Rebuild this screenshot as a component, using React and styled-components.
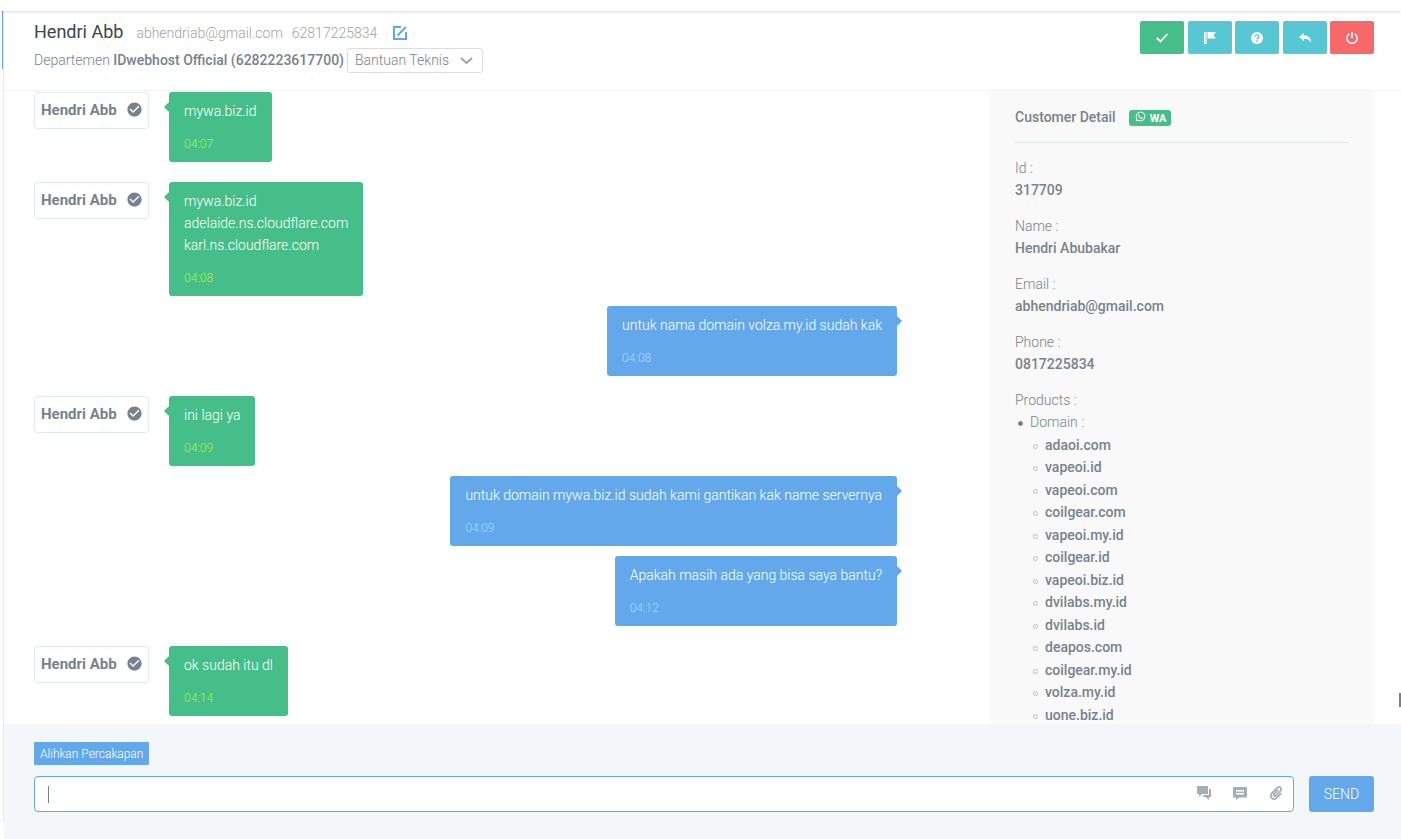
import React, { useState } from 'react';
import styled, { createGlobalStyle } from 'styled-components';
import { FaPaperclip, FaWhatsapp } from 'react-icons/fa';
import { MdCheckCircle } from 'react-icons/md';

const GlobalStyle = createGlobalStyle`
    *, *::before {
        box-sizing: border-box;
    }
    body {
        margin: 0;
        background: #fff;
        color: #76838f;
        font-family: Roboto, "Liberation Sans", sans-serif;
        font-size: 14px;
        font-weight: 300;
        line-height: 22px;
    }
    button, input, select {
        font: inherit;
        color: inherit;
    }
`

const Page = styled.div`
    display: flex;
    flex-direction: column;
    height: 100vh;
    position: relative;
    overflow: hidden;
`

const TopBar = styled.div`
    flex: 0 0 11px;
    background: #fff;
    box-shadow: 0 1px 3px rgba(0, 0, 0, 0.14);
    z-index: 1;
`

const Body = styled.div`
    flex: 1;
    min-height: 0;
    display: flex;
`

const ListEdge = styled.aside`
    flex: 0 0 4px;
    margin-bottom: 18px;
    border-right: 1px solid #e4eaec;
    border-bottom: 1px solid #e4eaec;
`

const ActiveMark = styled.div`
    height: 58px;
    margin-left: 2px;
    background: #62a8ea;
`

const Main = styled.main`
    flex: 1;
    min-width: 0;
    display: flex;
    flex-direction: column;
`

const Header = styled.header`
    flex: 0 0 80px;
    display: flex;
    justify-content: space-between;
    align-items: flex-start;
    padding: 10px 27px 0 30px;
    border-bottom: 1px solid #f3f3f4;
`

const TitleRow = styled.div`
    display: flex;
    align-items: baseline;
    height: 22px;
`

const Title = styled.h1`
    margin: 0 13px 0 0;
    color: #37474f;
    font-size: 18px;
    font-weight: 400;
    line-height: 22px;
`

const Contact = styled.div`
    display: flex;
    gap: 9px;
    margin-right: 16px;
    color: #a3a3a3;
`

const EditButton = styled.button`
    align-self: center;
    display: flex;
    padding: 2px 0 0;
    border: 0;
    background: none;
    color: #62a8ea;
`

const DepartmentRow = styled.div`
    display: flex;
    align-items: baseline;
    gap: 3px;
    margin-top: 5px;
`

const Strong = styled.strong`
    font-weight: 500;
`

const SelectWrap = styled.div`
    position: relative;
    color: #a3a3a3;
    svg {
        position: absolute;
        right: 10px;
        top: 9px;
        pointer-events: none;
    }
`

const Select = styled.select`
    display: block;
    appearance: none;
    width: 136px;
    height: 25px;
    padding: 0 7px 2px;
    border: 1px solid #ddd;
    border-radius: 3px;
    background: #fff;
    color: #76838f;
`

const Actions = styled.div`
    display: flex;
    justify-content: space-between;
    width: 234px;
`

const ActionButton = styled.button`
    display: flex;
    align-items: center;
    justify-content: center;
    width: 44px;
    height: 33px;
    padding: 0;
    border: 0;
    border-radius: 2px;
    background: ${props => props.$color};
    color: #fff;
`

const Content = styled.div`
    flex: 1;
    min-height: 0;
    display: flex;
    padding: 0 27px 0 30px;
    overflow: hidden;
`

const Messages = styled.div`
    flex: 1;
    padding: 1px 93px 0 0;
`

const Message = styled.div`
    display: flex;
    align-items: flex-start;
    justify-content: ${props => props.$out ? 'flex-end' : 'flex-start'};
    gap: 20px;
    margin-top: ${props => props.$out ? '10px' : '20px'};
    &:first-child {
        margin-top: 0;
    }
`

const Sender = styled.div`
    display: flex;
    align-items: center;
    justify-content: space-between;
    width: 115px;
    height: 37px;
    padding: 0 5px 2px 6px;
    border: 1px solid #e0e9f0;
    border-radius: 4px;
    font-size: 15px;
    font-weight: 700;
`

const Bubble = styled.div`
    position: relative;
    padding: 8px 15px 7px;
    border-radius: 3px;
    background: ${props => props.$out ? '#62a8ea' : '#46be8a'};
    color: #fff;
    white-space: pre-line;
    &::before {
        content: '';
        position: absolute;
        top: 10px;
        ${props => props.$out ? 'left: 100%' : 'right: 100%'};
        border: 5px solid transparent;
        border-${props => props.$out ? 'left' : 'right'}-color: ${props => props.$out ? '#62a8ea' : '#46be8a'};
        border-${props => props.$out ? 'right' : 'left'}-width: 0;
    }
`

const Time = styled.time`
    display: block;
    margin-top: 11px;
    color: ${props => props.$out ? '#b5d6f6' : '#bdee10'};
    font-size: 12px;
`

const Detail = styled.aside`
    flex: 0 0 384px;
    padding: 15px 25px;
    background: #f9f9f9;
    overflow: hidden;
`

const DetailHead = styled.div`
    display: flex;
    align-items: center;
    gap: 13px;
    padding-bottom: 14px;
    margin-bottom: 14px;
    border-bottom: 1px solid #e0e8ea;
`

const DetailTitle = styled.h2`
    margin: 0;
    font-size: 14px;
    font-weight: 500;
    line-height: 22px;
`

const Badge = styled.span`
    display: flex;
    align-items: flex-start;
    gap: 4px;
    height: 16px;
    margin-top: 1px;
    padding: 1px 5px 0 6px;
    border-radius: 3px;
    background: #46be8a;
    color: #fff;
    font-size: 11px;
    font-weight: 700;
    line-height: 16px;
`

const Fields = styled.dl`
    margin: 0;
    dd {
        margin: 0 0 14px;
        font-weight: 500;
    }
`

const ProductList = styled.ul`
    margin: 0;
    padding-left: 15px;
    list-style: none;
    li::before {
        content: '';
        display: inline-block;
        width: 5px;
        height: 5px;
        margin: 0 7px 0 -12px;
        border: 1px solid #76838f;
        border-radius: 50%;
        background: #76838f;
        vertical-align: middle;
    }
`

const DomainList = styled.ul`
    margin: 0;
    padding: 1px 0 0 15px;
    list-style: none;
    li:nth-child(even) {
        margin-bottom: 1px;
    }
    && li::before {
        border-color: #b4bcc3;
        background: none;
    }
`

const Composer = styled.form`
    flex: 0 0 115px;
    padding: 18px 27px 0 30px;
    background: #f3f7fa;
`

const TransferButton = styled.button`
    display: block;
    height: 23px;
    padding: 0 6px;
    border: 0;
    border-radius: 1px;
    background: #62a8ea;
    color: #fff;
    font-size: 12px;
`

const ComposerRow = styled.div`
    display: flex;
    gap: 15px;
    margin-top: 11px;
`

const Field = styled.div`
    flex: 1;
    display: flex;
    align-items: center;
    height: 36px;
    padding: 0 9px 0 13px;
    border: 1px solid #62a8ea;
    border-radius: 4px;
    background: #fff;
`

const Caret = styled.span`
    width: 1px;
    height: 17px;
    background: #76838f;
`

const MessageInput = styled.input`
    flex: 1;
    min-width: 0;
    padding: 0;
    border: 0;
    outline: 0;
    background: transparent;
`

const Tools = styled.div`
    display: flex;
    gap: 20px;
    padding-bottom: 2px;
`

const ToolButton = styled.button`
    display: flex;
    align-items: center;
    justify-content: center;
    width: 16px;
    height: 16px;
    padding: 0;
    border: 0;
    background: none;
    color: #a3afb7;
`

const SendButton = styled.button`
    width: 65px;
    height: 36px;
    padding: 0;
    border: 0;
    border-radius: 3px;
    background: #62a8ea;
    color: #fff;
`

const ScrollThumb = styled.div`
    position: absolute;
    right: 0;
    top: 693px;
    width: 2px;
    height: 14px;
    background: #808080;
`

const EditIcon = () => (
    <svg width="14" height="14" viewBox="0 0 14 14" fill="none" stroke="currentColor" strokeWidth="2">
        <path d="M8 1H1v12h12V6" />
        <path d="M4.500 9.500 13 1" />
    </svg>
)

const ChevronIcon = () => (
    <svg width="13" height="8" viewBox="0 0 13 8" fill="none" stroke="currentColor" strokeWidth="2">
        <path d="m1 1 5.5 5L12 1" />
    </svg>
)

const CheckIcon = () => (
    <svg width="12" height="10" viewBox="0 0 12 10" fill="none" stroke="currentColor" strokeWidth="1.8">
        <path d="M.8 5 4.500 8.500 11.300 1" />
    </svg>
)

const FlagIcon = () => (
    <svg width="12" height="12" viewBox="0 0 12 12" fill="currentColor">
        <path d="M0 0h1v12H0Z" />
        <path d="M1 0h2v12H1Z" opacity=".6" />
        <path d="M3.500 0H12L9.500 3.200 12 6.500H3.500Z" />
    </svg>
)

const HelpIcon = () => (
    <svg width="12" height="12" viewBox="0 0 12 12">
        <circle cx="6" cy="6" r="6" fill="currentColor" />
        <path d="M4.200 4.700C4.200 2.300 7.800 2.400 7.800 4.500 7.800 5.900 6 5.800 6 7.300" fill="none" stroke="#57c7d4" strokeWidth="1.400" />
        <path d="M5.200 8.200h1.600v1.500H5.200Z" fill="#57c7d4" />
    </svg>
)

const ReplyIcon = () => (
    <svg width="12" height="10" viewBox="0 0 12 10" fill="currentColor">
        <path d="M5 0 0 4l5 4V5.800c3 0 5.400.7 6.700 4.200C12.500 6 10.500 2.500 5 2.200Z" />
    </svg>
)

const PowerIcon = () => (
    <svg width="12" height="12" viewBox="0 0 12 12" fill="none" stroke="currentColor" strokeWidth="1.600">
        <path d="M3.300 1.900a5.100 5.100 0 1 0 5.400 0" />
        <path d="M6 0v6" />
    </svg>
)

const ChatsIcon = () => (
    <svg width="14" height="14" viewBox="0 0 14 14" fill="currentColor">
        <path d="M0 0h11v8H5l-3 3V8H0Z" />
        <path d="M12 3h2v8h-2v3L8.500 11H5.500L7 9h5Z" />
    </svg>
)

const ChatIcon = () => (
    <svg width="14" height="13" viewBox="0 0 14 13" fill="currentColor">
        <path fillRule="evenodd" d="M0 0h14v10.500H6.500L3 13v-2.500H0ZM3 3v1.500h8V3ZM3 6v1.500h8V6Z" />
    </svg>
)

const actions = [
    { label: 'Selesai', color: '#46be8a', icon: <CheckIcon /> },
    { label: 'Tandai', color: '#57c7d4', icon: <FlagIcon /> },
    { label: 'Bantuan', color: '#57c7d4', icon: <HelpIcon /> },
    { label: 'Balas', color: '#57c7d4', icon: <ReplyIcon /> },
    { label: 'Tutup', color: '#f96868', icon: <PowerIcon /> },
]

const messages = [
    { text: 'mywa.biz.id', time: '04:07' },
    { text: 'mywa.biz.id\nadelaide.ns.cloudflare.com\nkarl.ns.cloudflare.com', time: '04:08' },
    { out: true, text: 'untuk nama domain volza.my.id sudah kak', time: '04:08' },
    { text: 'ini lagi ya', time: '04:09' },
    { out: true, text: 'untuk domain mywa.biz.id sudah kami gantikan kak name servernya', time: '04:09' },
    { out: true, text: 'Apakah masih ada yang bisa saya bantu?', time: '04:12' },
    { text: 'ok sudah itu dl', time: '04:14' },
]

const customer = [
    ['Id', '317709'],
    ['Name', 'Hendri Abubakar'],
    ['Email', 'abhendriab@gmail.com'],
    ['Phone', '0817225834'],
]

const domains = [
    'adaoi.com', 'vapeoi.id', 'vapeoi.com', 'coilgear.com', 'vapeoi.my.id', 'coilgear.id', 'vapeoi.biz.id',
    'dvilabs.my.id', 'dvilabs.id', 'deapos.com', 'coilgear.my.id', 'volza.my.id', 'uone.biz.id',
]

const App = () => {
    const [draft, setDraft] = useState('')

    return (
        <Page>
            <GlobalStyle />
            <TopBar />
            <Body>
                <ListEdge><ActiveMark /></ListEdge>
                <Main>
                    <Header>
                        <div>
                            <TitleRow>
                                <Title>Hendri Abb</Title>
                                <Contact>
                                    <span>abhendriab@gmail.com</span>
                                    <span>62817225834</span>
                                </Contact>
                                <EditButton aria-label="Edit"><EditIcon /></EditButton>
                            </TitleRow>
                            <DepartmentRow>
                                <label htmlFor="department">Departemen <Strong>IDwebhost Official (6282223617700)</Strong></label>
                                <SelectWrap>
                                    <Select id="department">
                                        <option>Bantuan Teknis</option>
                                    </Select>
                                    <ChevronIcon />
                                </SelectWrap>
                            </DepartmentRow>
                        </div>
                        <Actions>
                            {actions.map(action => (
                                <ActionButton key={action.label} $color={action.color} aria-label={action.label}>{action.icon}</ActionButton>
                            ))}
                        </Actions>
                    </Header>
                    <Content>
                        <Messages>
                            {messages.map((message, i) => (
                                <Message key={i} $out={message.out}>
                                    {!message.out && <Sender>Hendri Abb<MdCheckCircle size={17} /></Sender>}
                                    <Bubble $out={message.out}>
                                        {message.text}
                                        <Time $out={message.out}>{message.time}</Time>
                                    </Bubble>
                                </Message>
                            ))}
                        </Messages>
                        <Detail>
                            <DetailHead>
                                <DetailTitle>Customer Detail</DetailTitle>
                                <Badge><FaWhatsapp size={11} />WA</Badge>
                            </DetailHead>
                            <Fields>
                                {customer.map(([label, value]) => (
                                    <React.Fragment key={label}>
                                        <dt>{label} :</dt>
                                        <dd>{value}</dd>
                                    </React.Fragment>
                                ))}
                            </Fields>
                            <div>Products :</div>
                            <ProductList>
                                <li>
                                    Domain :
                                    <DomainList>
                                        {domains.map(domain => <li key={domain}><Strong>{domain}</Strong></li>)}
                                    </DomainList>
                                </li>
                            </ProductList>
                        </Detail>
                    </Content>
                    <Composer onSubmit={e => e.preventDefault()}>
                        <TransferButton type="button">Alihkan Percakapan</TransferButton>
                        <ComposerRow>
                            <Field>
                                {draft === '' && <Caret />}
                                <MessageInput aria-label="Pesan" value={draft} onChange={e => setDraft(e.target.value)} />
                                <Tools>
                                    <ToolButton type="button" aria-label="Percakapan"><ChatsIcon /></ToolButton>
                                    <ToolButton type="button" aria-label="Template"><ChatIcon /></ToolButton>
                                    <ToolButton type="button" aria-label="Lampiran"><FaPaperclip size={14} /></ToolButton>
                                </Tools>
                            </Field>
                            <SendButton type="submit">SEND</SendButton>
                        </ComposerRow>
                    </Composer>
                </Main>
            </Body>
            <ScrollThumb />
        </Page>
    )
}

export default App
